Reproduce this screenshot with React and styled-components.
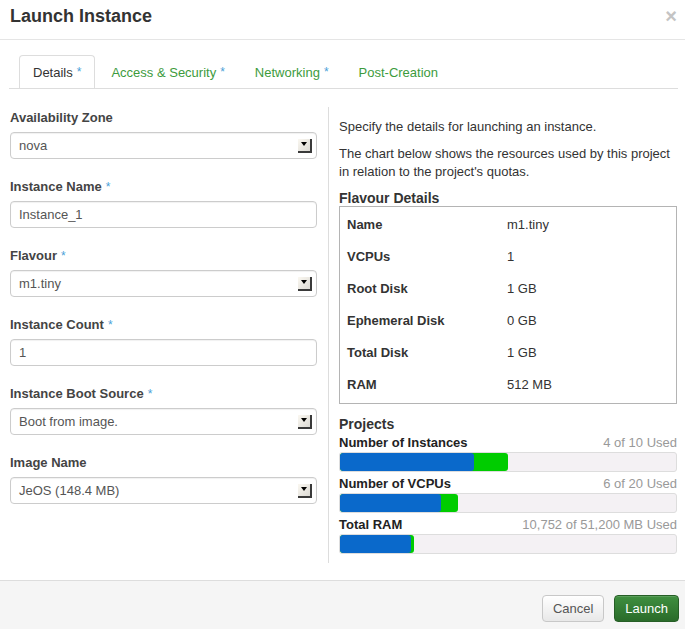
import React from "react"
import styled, { createGlobalStyle } from "styled-components"

const GlobalStyle = createGlobalStyle`
    html, body {
        margin: 0;
        padding: 0;
        background: #fff;
        overflow: hidden;
    }
    body {
        font-family: "Liberation Sans", Arial, Helvetica, sans-serif;
        font-size: 13px;
        color: #333;
    }
    * {
        box-sizing: border-box;
    }
`

const Modal = styled.div`
    width: 685px;
    height: 629px;
    display: flex;
    flex-direction: column;
    overflow: hidden;
    background: #fff;
`

const Header = styled.div`
    height: 40px;
    flex: 0 0 40px;
    padding: 5px 8px 0 10px;
    border-bottom: 1px solid #e5e5e5;
    display: flex;
    justify-content: space-between;
    align-items: flex-start;
    h3 {
        margin: 0;
        font-size: 18px;
        font-weight: bold;
        line-height: 22px;
        color: #333;
    }
`

const Close = styled.span`
    font-size: 20px;
    font-weight: bold;
    line-height: 22px;
    color: #c4c4c4;
`

const TabBar = styled.ul`
    list-style: none;
    display: flex;
    margin: 15px 7px 0 9px;
    padding: 0 0 0 10px;
    border-bottom: 1px solid #ddd;
    flex: 0 0 34px;
`

const Tab = styled.li`
    height: 33px;
    line-height: 33px;
    padding: 0 13px;
    margin-right: 2px;
    font-size: 13px;
    color: ${p => (p.$active ? "#333" : "#3d9b3d")};
    background: #fff;
    border: 1px solid ${p => (p.$active ? "#ddd" : "transparent")};
    border-bottom: none;
    border-radius: 4px 4px 0 0;
`

const Req = styled.span`
    color: #4a9fd8;
    font-size: 12px;
    font-weight: normal;
    vertical-align: top;
    margin-left: 4px;
`

const Body = styled.div`
    height: 491px;
    flex: 0 0 491px;
    display: flex;
    padding: 18px 8px 17px 10px;
`

const LeftCol = styled.div`
    width: 307px;
    flex: 0 0 307px;
    display: flex;
    flex-direction: column;
    padding-top: 2px;
`

const Group = styled.div`
    margin-bottom: 19px;
`

const Label = styled.div`
    font-size: 13px;
    font-weight: bold;
    line-height: 18px;
    color: #444;
    margin-bottom: 5px;
`

const Field = styled.div`
    height: 27px;
    display: flex;
    align-items: center;
    justify-content: space-between;
    padding: 0 4px 0 8px;
    border: 1px solid #ccc;
    border-radius: 4px;
    box-shadow: inset 0 1px 1px rgba(0, 0, 0, 0.06);
    color: #555;
    font-size: 13px;
    background: #fff;
`

const Arrow = styled.span`
    width: 14px;
    height: 14px;
    display: flex;
    align-items: center;
    justify-content: center;
    border-right: 2px solid #3a3a3a;
    border-bottom: 2px solid #3a3a3a;
    background: linear-gradient(135deg, #fbf8f1, #dcdad4);
    &::after {
        content: "";
        border-left: 3px solid transparent;
        border-right: 3px solid transparent;
        border-top: 4px solid #000;
        margin-top: -1px;
    }
`

const RightCol = styled.div`
    flex: 1;
    margin-left: 11px;
    border-left: 1px solid #ddd;
    padding: 11px 0 0 10px;
    display: flex;
    flex-direction: column;
    p {
        margin: 0 0 9px;
        line-height: 18px;
        color: #333;
    }
`

const SectionTitle = styled.h4`
    margin: ${p => p.$top || 0}px 0 0;
    font-size: 14px;
    font-weight: bold;
    line-height: 16px;
    color: #333;
`

const DetailBox = styled.div`
    border: 1px solid #b4b4b4;
    padding: 1px 0 3px;
`

const DetailRow = styled.div`
    display: grid;
    grid-template-columns: 160px 1fr;
    height: 32px;
    align-items: center;
    padding-left: 7px;
    b {
        font-weight: bold;
    }
`

const QuotaHead = styled.div`
    display: flex;
    justify-content: space-between;
    height: 18px;
    line-height: 18px;
    margin-top: ${p => p.$top || 0}px;
    b {
        color: #222;
    }
    span {
        color: #999;
    }
`

const Track = styled.div`
    height: 20px;
    border: 1px solid #ddd;
    border-radius: 3px;
    background: #f4f1f4;
    overflow: hidden;
    display: flex;
    margin-bottom: 3px;
`

const GreenFill = styled.div`
    height: 100%;
    background: #00cc00;
    border-radius: 3px;
    display: flex;
`

const BlueFill = styled.div`
    height: 100%;
    background: #0a69cb;
    border-radius: 3px;
`

const Footer = styled.div`
    flex: 0 0 57px;
    display: flex;
    justify-content: flex-end;
    align-items: flex-start;
    gap: 10px;
    padding: 14px 6px 0 0;
    background: #f5f5f5;
    border-top: 1px solid #ddd;
`

const Button = styled.button`
    height: 27px;
    padding: 0 10px;
    font-family: inherit;
    font-size: 13px;
    line-height: 25px;
    border-radius: 4px;
    cursor: pointer;
    color: ${p => (p.$primary ? "#fff" : "#555")};
    border: 1px solid ${p => (p.$primary ? "#265e26" : "#c8c8c8")};
    background: ${p =>
        p.$primary
            ? "linear-gradient(#3f8f3f, #2a6b2a)"
            : "linear-gradient(#ffffff, #e8e8e8)"};
    box-shadow: ${p => (p.$primary ? "inset 0 1px 0 rgba(255,255,255,0.15)" : "inset 0 1px 0 #fff")};
`

const fields = [
    { label: "Availability Zone", value: "nova", select: true },
    { label: "Instance Name", value: "Instance_1", req: true },
    { label: "Flavour", value: "m1.tiny", select: true, req: true },
    { label: "Instance Count", value: "1", req: true },
    { label: "Instance Boot Source", value: "Boot from image.", select: true, req: true },
    { label: "Image Name", value: "JeOS (148.4 MB)", select: true },
]

const flavour = [
    ["Name", "m1.tiny"],
    ["VCPUs", "1"],
    ["Root Disk", "1 GB"],
    ["Ephemeral Disk", "0 GB"],
    ["Total Disk", "1 GB"],
    ["RAM", "512 MB"],
]

const quotas = [
    { title: "Number of Instances", text: "4 of 10 Used", used: 40, added: 50 },
    { title: "Number of VCPUs", text: "6 of 20 Used", used: 30, added: 35 },
    { title: "Total RAM", text: "10,752 of 51,200 MB Used", used: 21, added: 22 },
]

const tabs = [
    { title: "Details", req: true, active: true },
    { title: "Access & Security", req: true },
    { title: "Networking", req: true },
    { title: "Post-Creation" },
]

const App = () => {
    return (
        <Modal>
            <GlobalStyle />
            <Header>
                <h3>Launch Instance</h3>
                <Close>×</Close>
            </Header>
            <TabBar>
                {tabs.map(t => (
                    <Tab key={t.title} $active={t.active}>
                        {t.title}
                        {t.req && <Req>*</Req>}
                    </Tab>
                ))}
            </TabBar>
            <Body>
                <LeftCol>
                    {fields.map(f => (
                        <Group key={f.label}>
                            <Label>
                                {f.label}
                                {f.req && <Req>*</Req>}
                            </Label>
                            <Field>
                                <span>{f.value}</span>
                                {f.select && <Arrow />}
                            </Field>
                        </Group>
                    ))}
                </LeftCol>
                <RightCol>
                    <p>Specify the details for launching an instance.</p>
                    <p>The chart below shows the resources used by this project in relation to the project's quotas.</p>
                    <SectionTitle>Flavour Details</SectionTitle>
                    <DetailBox>
                        {flavour.map(([k, v]) => (
                            <DetailRow key={k}>
                                <b>{k}</b>
                                <span>{v}</span>
                            </DetailRow>
                        ))}
                    </DetailBox>
                    <SectionTitle $top={12}>Projects</SectionTitle>
                    {quotas.map((q, i) => (
                        <div key={q.title}>
                            <QuotaHead $top={i === 0 ? 2 : 0}>
                                <b>{q.title}</b>
                                <span>{q.text}</span>
                            </QuotaHead>
                            <Track>
                                <GreenFill style={{ width: q.added + "%" }}>
                                    <BlueFill style={{ width: (q.used / q.added) * 100 + "%" }} />
                                </GreenFill>
                            </Track>
                        </div>
                    ))}
                </RightCol>
            </Body>
            <Footer>
                <Button>Cancel</Button>
                <Button $primary>Launch</Button>
            </Footer>
        </Modal>
    )
}

export default App
